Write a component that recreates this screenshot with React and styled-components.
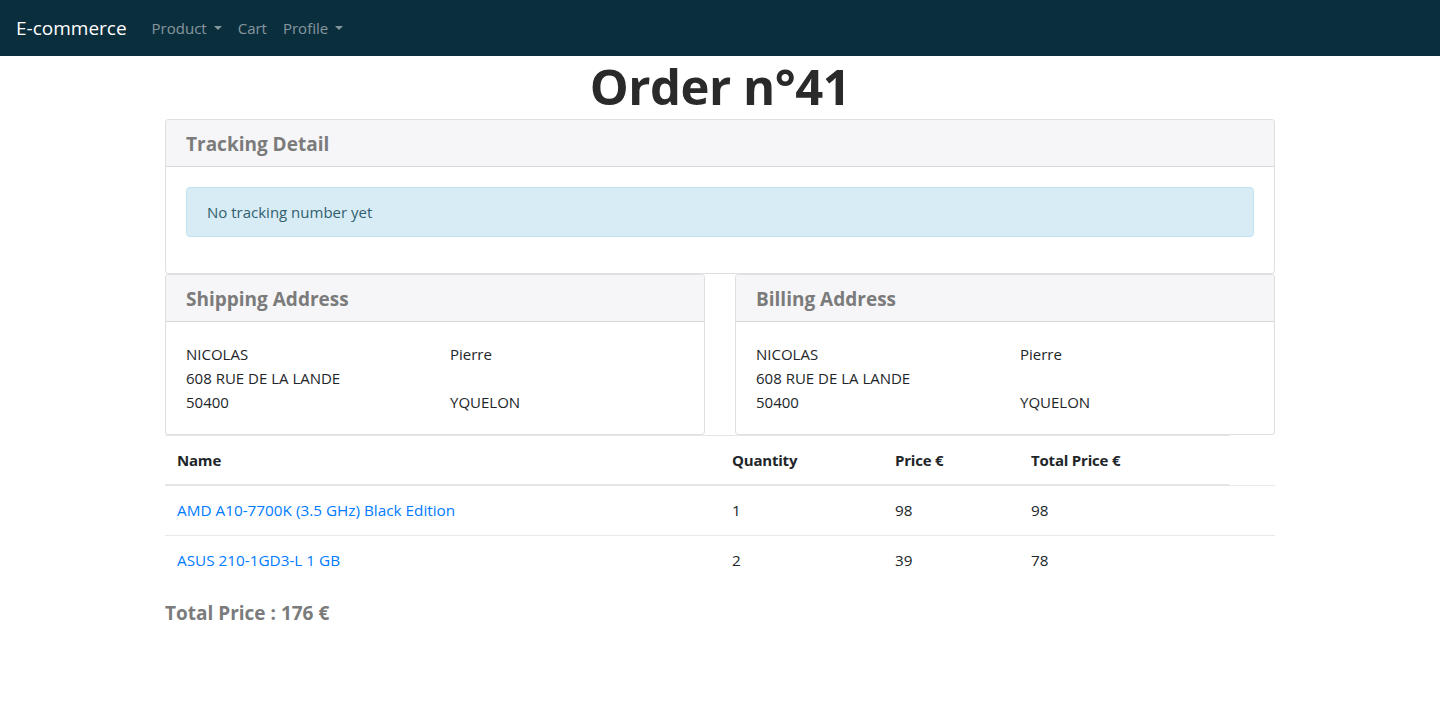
import React from 'react'
import styled, { createGlobalStyle } from 'styled-components'

const textMain = '#212529'
const textMuted = '#7b7b7b'
const border = 'rgba(0, 0, 0, 0.125)'
const link = '#007bff'

const GlobalStyle = createGlobalStyle`
  * {
    box-sizing: border-box;
  }
  body {
    margin: 0;
    font-family: "Open Sans", "Noto Sans", sans-serif;
    font-size: 15px;
    line-height: 24px;
    color: ${textMain};
    background: #fff;
  }
`

const Navbar = styled.nav`
  height: 56px;
  background: #0b2e3c;
  display: flex;
  align-items: center;
  padding: 0 16px;
`

const Brand = styled.a`
  color: #fff;
  font-size: 19px;
  margin-right: 17px;
  text-decoration: none;
`

const NavLink = styled.a`
  color: rgba(255, 255, 255, 0.5);
  font-size: 15px;
  padding: 0 8px;
  display: flex;
  align-items: center;
  text-decoration: none;

  ${(p) =>
    p.$dropdown &&
    `
    &::after {
      content: '';
      display: inline-block;
      margin-left: 7px;
      border-top: 4.5px solid;
      border-left: 4.5px solid transparent;
      border-right: 4.5px solid transparent;
    }
  `}
`

const Container = styled.main`
  width: 1110px;
  margin: 0 auto;
`

const Title = styled.h1`
  margin: 0;
  height: 63px;
  text-align: center;
  font-size: 49px;
  line-height: 61px;
  font-weight: 700;
  color: #2a2a2a;
  letter-spacing: -0.5px;
`

const Card = styled.section`
  border: 1px solid ${border};
  border-radius: 4px;
  background: #fff;
  overflow: hidden;
`

const CardHeader = styled.div`
  background: #f6f6f8;
  border-bottom: 1px solid ${border};
  padding: 13px 20px 11px;
  font-size: 19px;
  font-weight: 700;
  line-height: 22px;
  color: ${textMuted};
`

const CardBody = styled.div`
  padding: 20px;
`

const Alert = styled.div`
  background: #d8ecf5;
  border: 1px solid #bde4f1;
  border-radius: 4px;
  color: #31606f;
  padding: 12px 20px;
  margin-bottom: 16px;
`

const AddressRow = styled.div`
  display: grid;
  grid-template-columns: 1fr 1fr;
  gap: 30px;
`

const AddressGrid = styled.div`
  display: grid;
  grid-template-columns: 264px 1fr;
`

const Table = styled.table`
  width: 100%;
  border-collapse: collapse;
`

const Th = styled.th`
  text-align: left;
  font-weight: 700;
  padding: 12px;
  border-top: 1px solid #e6e6e6;
  border-bottom: 2px solid #e6e6e6;
  width: ${(p) => p.$w};
  letter-spacing: -0.2px;
`

const Td = styled.td`
  padding: 12px;
  border-top: 1px solid #e9e9e9;
  height: 50px;
  font-size: 15.3px;
`

const ProductLink = styled.a`
  color: ${link};
  text-decoration: none;
`

const Total = styled.h3`
  margin: 16px 0 0;
  font-size: 19px;
  font-weight: 700;
  color: ${textMuted};
  line-height: 24px;
`

const address = {
  lastName: 'NICOLAS',
  firstName: 'Pierre',
  street: '608 RUE DE LA LANDE',
  zip: '50400',
  city: 'YQUELON',
}

const items = [
  { name: 'AMD A10-7700K (3.5 GHz) Black Edition', qty: 1, price: 98 },
  { name: 'ASUS 210-1GD3-L 1 GB', qty: 2, price: 39 },
]

function AddressCard({ title, data }) {
  return (
    <Card>
      <CardHeader>{title}</CardHeader>
      <CardBody>
        <AddressGrid>
          <span>{data.lastName}</span>
          <span>{data.firstName}</span>
          <span>{data.street}</span>
          <span />
          <span>{data.zip}</span>
          <span>{data.city}</span>
        </AddressGrid>
      </CardBody>
    </Card>
  )
}

export default function App() {
  const total = items.reduce((sum, i) => sum + i.qty * i.price, 0)

  return (
    <>
      <GlobalStyle />
      <Navbar>
        <Brand href="#">E-commerce</Brand>
        <NavLink href="#" $dropdown>Product</NavLink>
        <NavLink href="#">Cart</NavLink>
        <NavLink href="#" $dropdown>Profile</NavLink>
      </Navbar>
      <Container>
        <Title>Order n°41</Title>
        <Card>
          <CardHeader>Tracking Detail</CardHeader>
          <CardBody>
            <Alert>No tracking number yet</Alert>
          </CardBody>
        </Card>
        <AddressRow>
          <AddressCard title="Shipping Address" data={address} />
          <AddressCard title="Billing Address" data={address} />
        </AddressRow>
        <Table>
          <thead>
            <tr>
              <Th $w="555px">Name</Th>
              <Th $w="163px">Quantity</Th>
              <Th $w="136px">Price €</Th>
              <Th $w="211px">Total Price €</Th>
              <td style={{ width: 45 }} />
            </tr>
          </thead>
          <tbody>
            {items.map((item) => (
              <tr key={item.name}>
                <Td>
                  <ProductLink href="#">{item.name}</ProductLink>
                </Td>
                <Td>{item.qty}</Td>
                <Td>{item.price}</Td>
                <Td>{item.qty * item.price}</Td>
                <Td />
              </tr>
            ))}
          </tbody>
        </Table>
        <Total>Total Price : {total} €</Total>
      </Container>
    </>
  )
}
